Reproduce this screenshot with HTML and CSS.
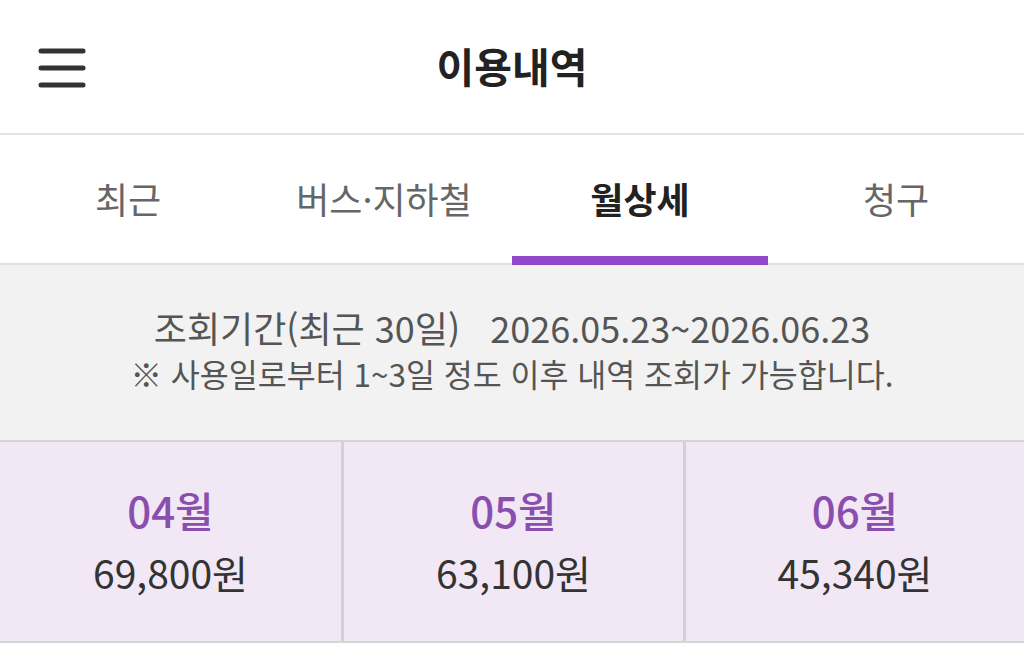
FILE: index.html
```html
<!DOCTYPE html>
<html lang="ko">
<head>
<meta charset="utf-8">
<title>이용내역</title>
<link rel="stylesheet" href="styles.css">
</head>
<body>
<header class="header">
  <button class="menu" aria-label="메뉴">
    <svg width="48" height="40" viewBox="0 0 48 40">
      <g stroke="#333" stroke-width="5" stroke-linecap="round">
        <line x1="3" y1="3" x2="45" y2="3"/>
        <line x1="3" y1="20" x2="45" y2="20"/>
        <line x1="3" y1="37" x2="45" y2="37"/>
      </g>
    </svg>
  </button>
  <h1 class="title">이용내역</h1>
</header>
<nav class="tabs">
  <div class="tab">최근</div>
  <div class="tab">버스·지하철</div>
  <div class="tab active">월상세</div>
  <div class="tab">청구</div>
</nav>
<section class="info">
  <p class="period">조회기간(최근 30일)&nbsp;&nbsp; 2026.05.23~2026.06.23</p>
  <p class="note">※ 사용일로부터 1~3일 정도 이후 내역 조회가 가능합니다.</p>
</section>
<section class="months">
  <div class="month">
    <div class="mlabel">04월</div>
    <div class="amount">69,800원</div>
  </div>
  <div class="month">
    <div class="mlabel">05월</div>
    <div class="amount">63,100원</div>
  </div>
  <div class="month">
    <div class="mlabel">06월</div>
    <div class="amount">45,340원</div>
  </div>
</section>
</body>
</html>
```
FILE: styles.css
```css
* { box-sizing: border-box; }
html, body { margin: 0; padding: 0; background: #fff; }
body {
  font-family: "Noto Sans CJK KR", "Noto Sans", sans-serif;
  color: #333;
  width: 1024px;
}
.header {
  position: relative;
  height: 135px;
  border-bottom: 2px solid #e2e2e2;
  display: flex;
  align-items: center;
  justify-content: center;
}
.menu {
  position: absolute;
  left: 38px;
  top: 48px;
  padding: 0;
  border: 0;
  background: none;
  line-height: 0;
}
.title {
  margin: 0;
  font-size: 41px;
  font-weight: 700;
  color: #222;
  line-height: 1;
  padding-bottom: 2px;
}
.tabs {
  display: grid;
  grid-template-columns: repeat(4, 1fr);
  height: 130px;
  border-bottom: 2px solid #e0e0e0;
}
.tab {
  position: relative;
  display: flex;
  align-items: center;
  justify-content: center;
  font-size: 36px;
  color: #666;
  padding-bottom: 2px;
}
.tab.active {
  color: #222;
  font-weight: 700;
}
.tab.active::after {
  content: "";
  position: absolute;
  left: 0;
  right: 0;
  bottom: -2px;
  height: 9px;
  background: #9147c9;
}
.info {
  background: #f2f2f2;
  height: 177px;
  border-bottom: 2px solid #d4d4d4;
  display: flex;
  flex-direction: column;
  align-items: center;
  justify-content: center;
  color: #555;
  padding-bottom: 6px;
}
.info .period {
  margin: 0;
  font-size: 36px;
  line-height: 1.2;
}
.info .note {
  margin: 6px 0 0;
  font-size: 31.5px;
  line-height: 1.2;
}
.months {
  display: grid;
  grid-template-columns: 341px 1fr 341px;
  height: 201px;
  background: #f1e7f5;
  border-bottom: 2px solid #d6d6d6;
}
.month {
  display: flex;
  flex-direction: column;
  align-items: center;
  justify-content: center;
  padding-bottom: 2px;
}
.month + .month { border-left: 3px solid #d2d0d4; }
.mlabel {
  font-size: 42px;
  color: #8a4fae;
  line-height: 1.3;
  font-weight: 500;
}
.amount {
  font-size: 39px;
  color: #333;
  line-height: 1.3;
  margin-top: 10px;
}
```
